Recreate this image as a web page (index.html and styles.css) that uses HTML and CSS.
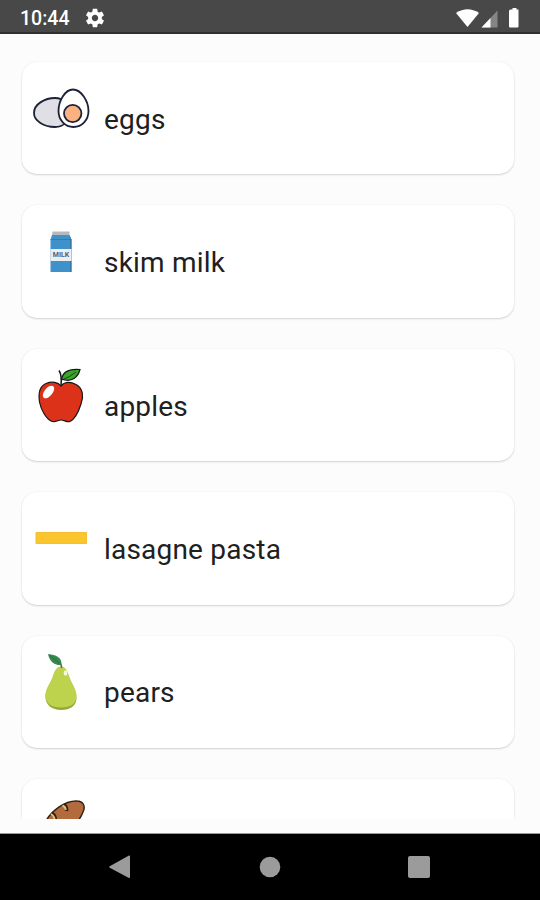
FILE: index.html
```html
<!DOCTYPE html>
<html lang="en">
<head>
    <meta charset="UTF-8">
    <meta name="viewport" content="width=device-width, initial-scale=1.0">
    <title>Grocery List</title>
    <link rel="stylesheet" href="styles.css">
</head>
<body>
    <!-- Status Bar -->
    <header class="status-bar">
        <span class="time">10:44</span>
        <svg class="gear" width="22" height="22" viewBox="0 0 24 24" fill="#fff">
            <path d="M19.43 12.98c.04-.32.07-.64.07-.98s-.03-.66-.07-.98l2.11-1.65c.19-.15.24-.42.12-.64l-2-3.46c-.12-.22-.39-.3-.61-.22l-2.49 1c-.52-.4-1.08-.73-1.69-.98l-.38-2.65C14.46 2.18 14.25 2 14 2h-4c-.25 0-.46.18-.49.42l-.38 2.65c-.61.25-1.17.59-1.69.98l-2.49-1c-.23-.09-.49 0-.61.22l-2 3.46c-.13.22-.07.49.12.64l2.11 1.65c-.04.32-.07.65-.07.98s.03.66.07.98l-2.11 1.65c-.19.15-.24.42-.12.64l2 3.46c.12.22.39.3.61.22l2.49-1c.52.4 1.08.73 1.69.98l.38 2.65c.03.24.24.42.49.42h4c.25 0 .46-.18.49-.42l.38-2.65c.61-.25 1.17-.59 1.69-.98l2.49 1c.23.09.49 0 .61-.22l2-3.46c.12-.22.07-.49-.12-.64l-2.11-1.65zM12 15.5c-1.93 0-3.5-1.57-3.5-3.5s1.57-3.5 3.5-3.5 3.500 1.57 3.500 3.500-1.57 3.500-3.500 3.500z"/>
        </svg>
        <svg class="signals" width="66" height="22" viewBox="0 0 66 22" fill="#fff">
            <path d="M0 6Q11.500 -1.500 23 6L11.500 20Z"/>
            <path d="M41.500 3.500V20.500H25.500Z" fill="#858585"/>
            <path d="M34.500 11V20.500H25.500Z"/>
            <path d="M54.500 2.500H56.500V1H60.500V2.500H62.500V19.500Q62.500 20.500 61.500 20.500H54Q53 20.500 53 19.500V4.500Q53 2.500 54.500 2.500Z"/>
        </svg>
    </header>

    <!-- Grocery Items -->
    <main class="list">
        <div class="card">
            <svg class="picture" viewBox="0 0 82 112" stroke="#1c2138" stroke-width="1.800">
                <path d="M12 51C12 42 23 36 33 36C42 36 47 43 47 51C47 59 42 65 33 65C22 65 12 59 12 51Z" fill="#dfdfe5"/>
                <path d="M51 27.500C59 27.500 66.500 39 66.500 49C66.500 58 60 65 51.500 65C43 65 36.500 58 36.500 49C36.500 39 43 27.500 51 27.500Z" fill="#fff"/>
                <circle cx="50.700" cy="51.500" r="8.700" fill="#fbb182"/>
            </svg>
            <span class="name">eggs</span>
        </div>

        <div class="card">
            <svg class="picture" viewBox="0 0 82 112">
                <path d="M30.500 25.500H47.500V29H30Z" fill="#b5b9bb"/>
                <path d="M30 29H47.500L49.500 34V66H28.500V34Z" fill="#3f91cb"/>
                <path d="M28.500 33.500H49.500" stroke="#347aaa"/>
                <path d="M47.500 29L49.500 34V66H48V34Z" fill="#3479a8"/>
                <path d="M28.500 43H49.500V55H28.500Z" fill="#eceef0"/>
                <text class="label" x="39" y="50.500" text-anchor="middle">MILK</text>
            </svg>
            <span class="name">skim milk</span>
        </div>

        <div class="card">
            <svg class="picture" viewBox="0 0 82 112" stroke="#171717" stroke-width="1.200">
                <path d="M37 21.500Q40 26 39 37" fill="none" stroke-width="1.500"/>
                <path d="M39.500 30C41 22 47 19.500 58 20.500C56 28 50 34 39.500 30Z" fill="#39a52b"/>
                <path d="M40 31Q48 28 54 23" fill="none" stroke-width=".7"/>
                <path d="M39 37C43 32.500 49 33 54 35.500C61 39 62 48 59 55C56.500 63 53 70 48 72.500C45 73.500 42 71 39 71C36 71 33 74 29 72C24 69.500 19 61 17.500 53C16 43 18 37 24 34.500C30 32 36 33 39 37Z" fill="#dc321a"/>
                <ellipse cx="26.500" cy="43" rx="4" ry="7.500" fill="#fff" stroke="none" transform="rotate(40 26.500 43)"/>
            </svg>
            <span class="name">apples</span>
        </div>

        <div class="card">
            <svg class="picture" viewBox="0 0 82 112">
                <path d="M14 40.500H64.500V51.500H14Z" fill="#fbc52e" stroke="#f6bd37"/>
            </svg>
            <span class="name">lasagne pasta</span>
        </div>

        <div class="card">
            <svg class="picture" viewBox="0 0 82 112">
                <path d="M40 31C36 31 33.500 35 31.500 41C28.500 48 23 54 23.500 62C24 69 30 74 39 74C48 74 54.500 70 54.500 62C54.500 54 49 48 46.500 41C44.500 35 43 31 40 31Z" fill="#93ab36"/>
                <path d="M39 30.500C34.500 30.500 32.500 35 30.500 41C28 48 23 53 23.500 60C24 68 30 71.500 39 71.500C48 71.500 54.500 68 54.500 60C54.500 53 50 48 47.500 41C45.500 35 43.500 30.500 39 30.500Z" fill="#bed34d"/>
                <ellipse cx="43.500" cy="37" rx="1.800" ry="2.800" fill="#f5f9dc"/>
                <path d="M39.500 32Q40 29 37.500 27" fill="none" stroke="#7c5c32" stroke-width="1.500"/>
                <path d="M26 18C34 19 40 21 39.500 29C32 29.500 28 26 26 18Z" fill="#368851"/>
                <path d="M27 19L38.500 28" stroke="#226c3d" stroke-width=".7"/>
            </svg>
            <span class="name">pears</span>
        </div>

        <div class="card">
            <svg class="picture" viewBox="0 0 82 112">
                <path d="M24 42C29 32 43 21.500 55 22C61 22 64 27 61 33C55 49 35 60 24 57C20 54 21 47 24 42Z" fill="#b36b3e" stroke="#2c2015" stroke-width="1.400"/>
                <path d="M41.500 26Q45 27 44.500 32M29.500 34.500Q33.500 36 33.500 42" fill="none" stroke="#2c2015" stroke-width="3.500"/>
                <path d="M40.500 26.500Q44 28 43.500 31M29 35Q32.500 37 32.500 41" fill="none" stroke="#e8c078" stroke-width="2"/>
            </svg>
        </div>
    </main>

    <!-- Navigation Bar -->
    <nav class="nav-bar">
        <svg width="24" height="26" viewBox="0 0 24 26" fill="#9b9b9b"><path d="M1.700 12.300L20.500 1.700Q22 1 22 2.500V23Q22 24.500 20.500 23.800L1.700 13.700Q.7 13 1.700 12.300Z"/></svg>
        <svg width="24" height="26" viewBox="0 0 24 26" fill="#9b9b9b"><circle cx="12" cy="13" r="10.300"/></svg>
        <svg width="24" height="26" viewBox="0 0 24 26" fill="#9b9b9b"><rect x="1" y="2" width="22" height="22" rx="2"/></svg>
    </nav>
</body>
</html>
```
FILE: styles.css
```css
body {
    display: flex;
    flex-direction: column;
    height: 900px;
    margin: 0;
    overflow: hidden;
    background-color: #fcfcfc;
    font-family: Roboto, sans-serif;
}
.status-bar {
    display: flex;
    align-items: center;
    box-sizing: border-box;
    height: 34px;
    padding: 3px 20px 0 20px;
    background-color: #484848;
    border-bottom: 2px solid #303030;
    color: #fff;
}
.time {
    width: 64px;
    padding-top: 1px;
    font-size: 19.5px;
    font-weight: 500;
}
.signals {
    margin-left: auto;
    margin-right: -2px;
}
.list {
    display: flex;
    flex-direction: column;
    gap: 31px;
    box-sizing: border-box;
    height: 785px;
    padding: 28px 26px 0 22px;
    overflow: hidden;
}
.card {
    display: flex;
    flex: none;
    align-items: center;
    height: 112.4px;
    background-color: #fff;
    border-radius: 15px;
    box-shadow: 0 1px 2px rgba(0, 0, 0, 0.16), 0 0 2px rgba(0, 0, 0, 0.05);
}
.picture {
    width: 82px;
    height: 112px;
}
.label {
    font-size: 7px;
    font-weight: 700;
    fill: #59616c;
}
.name {
    padding-top: 2.4px;
    color: #202020;
    font-size: 28px;
    letter-spacing: 0.2px;
}
.nav-bar {
    display: flex;
    align-items: center;
    justify-content: space-between;
    box-sizing: border-box;
    height: 67px;
    margin-top: auto;
    padding: 0 109px 0 108px;
    background-color: #000;
    border-top: 1px solid #999;
}
```
